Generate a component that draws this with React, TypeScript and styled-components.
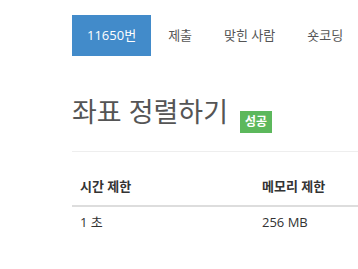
import React from "react";
import styled, { createGlobalStyle } from "styled-components";

const Global = createGlobalStyle`
  html, body { margin: 0; padding: 0; background: #fff; }
  body {
    font-family: "Open Sans", "Noto Sans CJK KR", sans-serif;
    font-size: 13px;
    color: #333;
    overflow: hidden;
  }
`;

const Page = styled.div`
  padding: 15px 0 0 72px;
  overflow: hidden;
`;

const Tabs = styled.ul`
  display: flex;
  list-style: none;
  margin: 0;
  padding: 0;
`;

const Tab = styled.li<{ $active?: boolean }>`
  margin-right: 2px;
  padding: 10px 15px 11px;
  line-height: 20px;
  font-size: 13px;
  background: ${(p) => (p.$active ? "#428bca" : "transparent")};
  color: ${(p) => (p.$active ? "#fff" : "#555")};
  white-space: nowrap;
`;

const Header = styled.div`
  margin-top: 40px;
  padding-bottom: 18px;
  border-bottom: 1px solid #eee;
  display: flex;
  align-items: flex-start;
`;

const Title = styled.h1`
  margin: 0;
  font-size: 27px;
  font-weight: 400;
  line-height: 32px;
  color: #555;
`;

const Label = styled.span`
  margin-left: 12px;
  margin-top: 15px;
  background: #5cb85c;
  color: #fff;
  font-size: 12px;
  font-weight: 700;
  line-height: 22px;
  padding: 0 5px;
`;

const Table = styled.table`
  margin-top: 16px;
  border-collapse: collapse;
  width: 100%;
`;

const Th = styled.th<{ $w?: number }>`
  text-align: left;
  font-weight: 700;
  font-size: 13px;
  padding: 8px 8px 9px;
  line-height: 20px;
  border-bottom: 2px solid #ddd;
  width: ${(p) => (p.$w ? `${p.$w}px` : "auto")};
  white-space: nowrap;
`;

const Td = styled.td`
  padding: 5px 8px 8px;
  line-height: 20px;
  font-size: 13px;
  white-space: nowrap;
`;

export default function App() {
  return (
    <>
      <Global />
      <Page>
        <Tabs>
          <Tab $active>11650번</Tab>
          <Tab>제출</Tab>
          <Tab>맞힌 사람</Tab>
          <Tab>숏코딩</Tab>
        </Tabs>
        <Header>
          <Title>좌표 정렬하기</Title>
          <Label>성공</Label>
        </Header>
        <Table>
          <thead>
            <tr>
              <Th $w={166}>시간 제한</Th>
              <Th>메모리 제한</Th>
            </tr>
          </thead>
          <tbody>
            <tr>
              <Td>1 초</Td>
              <Td>256 MB</Td>
            </tr>
          </tbody>
        </Table>
      </Page>
    </>
  );
}
